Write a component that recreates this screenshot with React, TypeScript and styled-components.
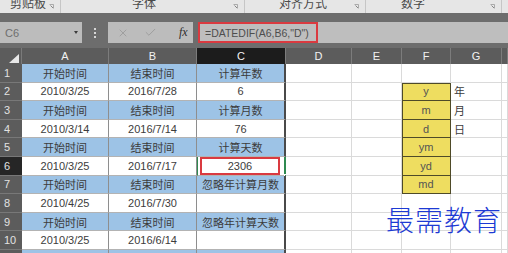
import React from "react";
import styled, { createGlobalStyle } from "styled-components";
import { X, Check } from "lucide-react";

const GlobalStyle = createGlobalStyle`
  html, body { margin: 0; padding: 0; background: #fff; }
  body { width: 508px; height: 253px; overflow: hidden; font-family: "Liberation Sans", "Noto Sans CJK SC", sans-serif; }
  * { box-sizing: border-box; }
`;

const Page = styled.div`
  position: relative;
  width: 508px;
  height: 253px;
  overflow: hidden;
  background: #fff;
`;

/* ---------- ribbon strip ---------- */
const Ribbon = styled.div`
  display: flex;
  height: 13px;
  background: #e6e6e6;
  overflow: hidden;
`;

const Group = styled.div<{ $w: number; $x: number }>`
  display: flex;
  flex: 0 0 ${(p) => p.$w}px;
  padding-left: ${(p) => p.$x}px;
  border-right: 1px solid #c6c6c6;
`;

const GroupLabel = styled.span`
  font-family: "Noto Sans CJK SC", sans-serif;
  font-size: 12px;
  line-height: 12px;
  margin-top: -3px;
  color: #4a4a4a;
  white-space: nowrap;
`;

const Launcher = styled.svg`
  margin: 4px 6px 0 auto;
  flex: 0 0 auto;
`;

/* ---------- formula bar ---------- */
const FormulaArea = styled.div`
  display: flex;
  height: 35px;
  padding: 9px 0 5px;
  background: #6d6d6d;
`;

const NameBox = styled.div`
  display: flex;
  align-items: center;
  flex: 0 0 82px;
  padding: 0 4px 0 5px;
  background: #bcbcbc;
  color: #6e6e6e;
  font-size: 11px;
`;

const DropArrow = styled.span`
  margin-left: auto;
  width: 0;
  height: 0;
  border-left: 2.5px solid transparent;
  border-right: 2.5px solid transparent;
  border-top: 3px solid #3c3c3c;
`;

const Grip = styled.div`
  display: flex;
  flex-direction: column;
  align-items: center;
  justify-content: center;
  gap: 2px;
  flex: 0 0 26px;
`;

const GripDot = styled.span`
  width: 2px;
  height: 2px;
  background: #d6d6d6;
`;

const ButtonBox = styled.div`
  display: flex;
  align-items: center;
  flex: 0 0 85px;
  padding-left: 9px;
  gap: 15px;
  background: #bcbcbc;
  color: #8c8c8c;
`;

const Fx = styled.span`
  margin-left: 7px;
  font-family: "Liberation Serif", serif;
  font-style: italic;
  font-size: 12px;
  color: #2e2e2e;
`;

const FormulaInput = styled.div`
  display: flex;
  flex: 1;
  margin-left: 5px;
  background: #bebebe;
`;

const FormulaText = styled.div`
  display: flex;
  align-items: center;
  width: 120px;
  padding-left: 5px;
  border: 2px solid #da3a40;
  color: #4e4e4e;
  font-size: 10.5px;
  white-space: nowrap;
`;

/* ---------- sheet ---------- */
const Sheet = styled.div`
  display: grid;
  grid-template-columns: 22px 87px 88px 89px 66px 50px 49px 51px 6px;
  grid-template-rows: 16px repeat(11, 18.6px);
`;

const Corner = styled.div`
  display: flex;
  align-items: flex-end;
  justify-content: flex-end;
  padding: 0 2px 1px 0;
  background: #5c5c5c;
  border-right: 1px solid #7a7a7a;
`;

const ColHead = styled.div<{ $active?: boolean }>`
  display: flex;
  align-items: center;
  justify-content: center;
  background: ${(p) => (p.$active ? "#1c1c1c" : "#5c5c5c")};
  border-right: 1px solid #7c7c7c;
  color: #f2f2f2;
  font-size: 11px;
`;

const RowHead = styled.div<{ $active?: boolean }>`
  display: flex;
  align-items: center;
  padding-left: 4px;
  background: ${(p) => (p.$active ? "#262626" : "#5c5c5c")};
  border-bottom: 1px solid #787878;
  color: #e2e2e2;
  font-size: 11px;
`;

type Tone = "blue" | "white" | "yellow" | "empty";

const toneBg: Record<Tone, string> = {
  blue: "#9dc3e6",
  white: "#ffffff",
  yellow: "#eedd60",
  empty: "#ffffff",
};

const Cell = styled.div<{ $tone: Tone; $edge?: boolean; $left?: boolean; $top?: boolean }>`
  position: relative;
  display: flex;
  align-items: center;
  justify-content: ${(p) => (p.$left ? "flex-start" : "center")};
  padding-left: ${(p) => (p.$left ? "3px" : "0")};
  background: ${(p) => toneBg[p.$tone]};
  color: ${(p) => (p.$tone === "yellow" ? "#545454" : "#3c3c3c")};
  font-size: 11px;
  white-space: nowrap;
  overflow: visible;
  border-right: ${(p) =>
    p.$edge
      ? "2px solid #4a4a4a"
      : p.$tone === "yellow"
      ? "1px solid #4e4a28"
      : p.$tone === "empty"
      ? "1px solid #dadada"
      : "1px solid #8e8e8e"};
  border-bottom: ${(p) =>
    p.$tone === "yellow"
      ? "1px solid #4e4a28"
      : p.$tone === "empty"
      ? "1px solid #dadada"
      : "1px solid #b3b3b3"};
  box-shadow: ${(p) =>
    p.$tone === "yellow"
      ? p.$top
        ? "inset 1px 1px 0 #4e4a28"
        : "inset 1px 0 0 #4e4a28"
      : "none"};
`;

const CjkText = styled.span`
  font-family: "Noto Sans CJK SC", sans-serif;
  font-size: 11px;
`;

const SelectedCell = styled.div`
  position: relative;
  display: flex;
  padding: 0 4px 0 2px;
  background: #fff;
  border-left: 1px solid #2f8a50;
  border-right: 2px solid #2f8a50;
  border-bottom: 1px solid #b3b3b3;
`;

const RedBox = styled.div`
  display: flex;
  flex: 1;
  align-items: center;
  justify-content: center;
  border: 2px solid #da3a40;
  color: #3c3c3c;
  font-size: 11px;
`;

const Handle = styled.span`
  position: absolute;
  right: -4px;
  bottom: -3px;
  width: 4px;
  height: 4px;
  background: #2f8a50;
  border: 1px solid #fff;
`;

const Watermark = styled.div`
  position: absolute;
  left: 386px;
  top: 204px;
  font-family: "Noto Sans CJK SC", sans-serif;
  font-weight: 300;
  font-size: 28px;
  line-height: 30px;
  letter-spacing: 1px;
  color: #1d3ad4;
`;

/* ---------- data ---------- */
type Row = {
  tone: "blue" | "white";
  a: string;
  b: string;
  c: string;
  f?: string;
  g?: string;
};

const rows: Row[] = [
  { tone: "blue", a: "开始时间", b: "结束时间", c: "计算年数" },
  { tone: "white", a: "2010/3/25", b: "2016/7/28", c: "6", f: "y", g: "年" },
  { tone: "blue", a: "开始时间", b: "结束时间", c: "计算月数", f: "m", g: "月" },
  { tone: "white", a: "2010/3/14", b: "2016/7/14", c: "76", f: "d", g: "日" },
  { tone: "blue", a: "开始时间", b: "结束时间", c: "计算天数", f: "ym" },
  { tone: "white", a: "2010/3/25", b: "2016/7/17", c: "2306", f: "yd" },
  { tone: "blue", a: "开始时间", b: "结束时间", c: "忽略年计算月数", f: "md" },
  { tone: "white", a: "2010/4/25", b: "2016/7/30", c: "" },
  { tone: "blue", a: "开始时间", b: "结束时间", c: "忽略年计算天数" },
  { tone: "white", a: "2010/3/25", b: "2016/6/14", c: "" },
  { tone: "blue", a: "", b: "", c: "" },
];

const cols = ["A", "B", "C", "D", "E", "F", "G", ""];

const isCjk = (s: string) => /[\u4e00-\u9fff]/.test(s);
const Txt = ({ s }: { s: string }) => (isCjk(s) ? <CjkText>{s}</CjkText> : <>{s}</>);

const LauncherIcon = () => (
  <Launcher width="5" height="5" viewBox="0 0 5 5">
    <path d="M0.5 0.5 H4.5 V4.5" fill="none" stroke="#9a9a9a" strokeWidth="0.8" />
    <path d="M1.5 1.5 L4 4" stroke="#7a7a7a" strokeWidth="0.9" />
  </Launcher>
);

export default function App() {
  return (
    <Page>
      <GlobalStyle />
      <Ribbon>
        <Group $w={61} $x={10}>
          <GroupLabel>剪贴板</GroupLabel>
          <LauncherIcon />
        </Group>
        <Group $w={184} $x={71}>
          <GroupLabel>字体</GroupLabel>
          <LauncherIcon />
        </Group>
        <Group $w={121} $x={34}>
          <GroupLabel>对齐方式</GroupLabel>
          <LauncherIcon />
        </Group>
        <Group $w={136} $x={35}>
          <GroupLabel>数字</GroupLabel>
          <LauncherIcon />
        </Group>
      </Ribbon>

      <FormulaArea>
        <NameBox>
          C6
          <DropArrow />
        </NameBox>
        <Grip>
          <GripDot />
          <GripDot />
          <GripDot />
        </Grip>
        <ButtonBox>
          <X size={12} strokeWidth={1.2} />
          <Check size={13} strokeWidth={1.2} />
          <Fx>fx</Fx>
        </ButtonBox>
        <FormulaInput>
          <FormulaText>=DATEDIF(A6,B6,"D")</FormulaText>
        </FormulaInput>
      </FormulaArea>

      <Sheet>
        <Corner>
          <svg width="10" height="9" viewBox="0 0 10 9">
            <polygon points="10,0 10,9 0,9" fill="#e8e8e8" />
          </svg>
        </Corner>
        {cols.map((c, i) => (
          <ColHead key={i} $active={c === "C"}>
            {c}
          </ColHead>
        ))}

        {rows.map((r, i) => {
          const n = i + 1;
          const selected = n === 6;
          return (
            <React.Fragment key={n}>
              <RowHead $active={selected}>{n}</RowHead>
              <Cell $tone={r.tone}>
                <Txt s={r.a} />
              </Cell>
              <Cell $tone={r.tone}>
                <Txt s={r.b} />
              </Cell>
              {selected ? (
                <SelectedCell>
                  <RedBox>{r.c}</RedBox>
                  <Handle />
                </SelectedCell>
              ) : (
                <Cell $tone={r.tone} $edge>
                  <Txt s={r.c} />
                </Cell>
              )}
              <Cell $tone="empty" />
              <Cell $tone="empty" />
              {r.f ? (
                <Cell $tone="yellow" $top={n === 2}>
                  {r.f}
                </Cell>
              ) : (
                <Cell $tone="empty" />
              )}
              <Cell $tone="empty" $left>
                {r.g ? <Txt s={r.g} /> : null}
              </Cell>
              <Cell $tone="empty" />
            </React.Fragment>
          );
        })}
      </Sheet>

      <Watermark>最需教育</Watermark>
    </Page>
  );
}
